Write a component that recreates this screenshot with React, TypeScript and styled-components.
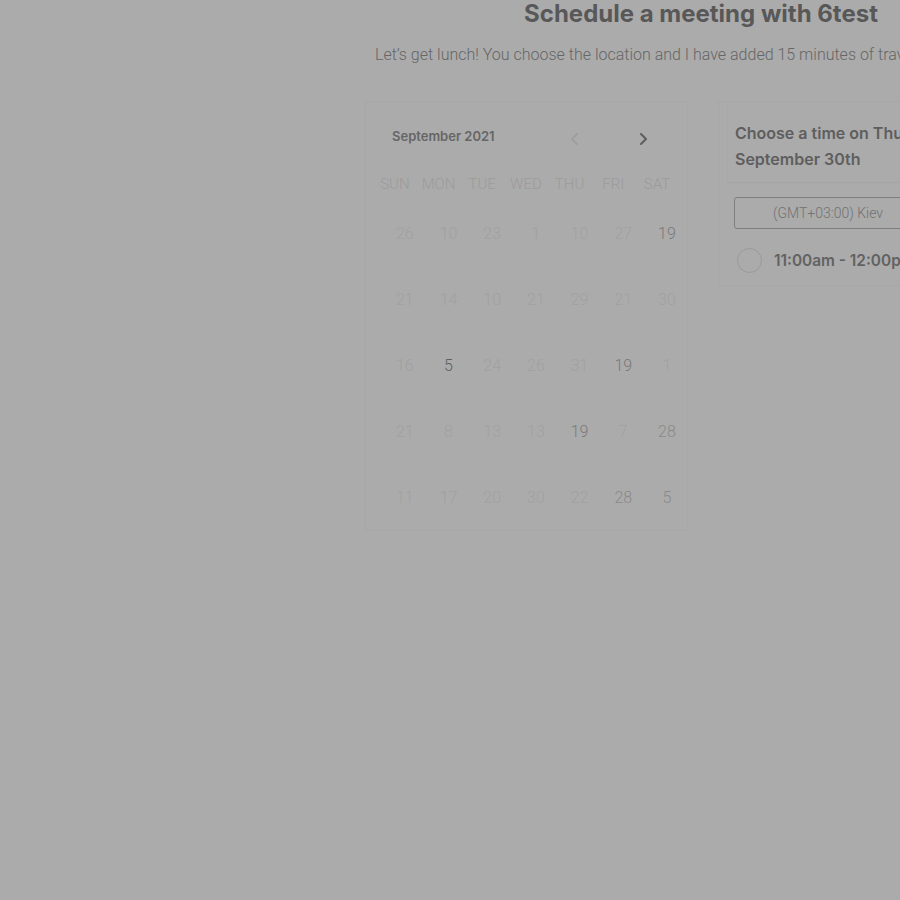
import React from "react";
import styled, { createGlobalStyle } from "styled-components";

const GlobalStyle = createGlobalStyle`
  html, body { margin: 0; padding: 0; background: #ababab; overflow: hidden; }
  * { box-sizing: border-box; }
`;

const Page = styled.div`
  width: 900px;
  height: 900px;
  overflow: hidden;
`;

const Container = styled.div`
  margin-left: 365px;
  width: 672px;
  display: flex;
  flex-direction: column;
`;

const Title = styled.h1`
  margin: 0;
  height: 27px;
  font-family: Inter, "Noto Sans", sans-serif;
  font-weight: 700;
  font-size: 24px;
  line-height: 27px;
  color: #585858;
  text-align: center;
`;

const Description = styled.p`
  margin: 16px 0 0 10px;
  font-family: Roboto, sans-serif;
  font-weight: 300;
  font-size: 16px;
  line-height: 24px;
  color: #666;
  white-space: nowrap;
`;

const Main = styled.div`
  margin-top: 34px;
  display: flex;
  align-items: flex-start;
  gap: 30px;
`;

const CalendarCard = styled.div`
  width: 323px;
  height: 430px;
  border: 1px solid #a7a7a7;
  border-radius: 3px;
  padding: 22px 10px 0 7px;
`;

const MonthBar = styled.div`
  display: flex;
  align-items: center;
  height: 24px;
  padding-left: 19px;
`;

const MonthLabel = styled.div`
  font-family: Inter, sans-serif;
  font-weight: 600;
  font-size: 13px;
  color: #666;
  width: 158px;
`;

const NavButton = styled.div<{ $active?: boolean }>`
  width: 72px;
  display: flex;
  justify-content: center;
  padding-top: 6px;
  color: ${(p) => (p.$active ? "#5e5e5e" : "#9e9e9e")};
`;

const DayHead = styled.div`
  margin-top: 26px;
  display: grid;
  grid-template-columns: repeat(7, 43.7px);
`;

const HeadCell = styled.div`
  text-align: center;
  font-family: Roboto, sans-serif;
  font-weight: 300;
  font-size: 15px;
  line-height: 20px;
  color: #9b9b9b;
`;

const DayGrid = styled.div`
  margin-top: 30px;
  padding-left: 10px;
  display: grid;
  grid-template-columns: repeat(7, 43.7px);
  grid-auto-rows: 66px;
`;

const DayCell = styled.div<{ $tone: number }>`
  text-align: center;
  font-family: Roboto, sans-serif;
  font-weight: 300;
  font-size: 16px;
  line-height: 20px;
  color: ${(p) => ["#a1a1a1", "#8a8a8a", "#797979", "#5f5f5f"][p.$tone]};
`;

const TimePanel = styled.div`
  width: 320px;
  height: 185px;
  border: 1px solid #a7a7a7;
  border-right: none;
  padding: 0 0 0 8px;
  display: flex;
  flex-direction: column;
`;

const PanelHeader = styled.div`
  padding: 18px 0 10px 7px;
  border-left: 1px solid #a8a8a8;
  border-bottom: 1px solid #a5a5a5;
  font-family: Inter, sans-serif;
  font-weight: 600;
  font-size: 16px;
  line-height: 26px;
  color: #5e5e5e;
  white-space: nowrap;
`;

const ZoneSelect = styled.div`
  margin: 14px 0 0 7px;
  width: 188px;
  height: 32px;
  flex-shrink: 0;
  border: 1px solid #7e7e7e;
  border-radius: 3px;
  display: flex;
  align-items: center;
  justify-content: center;
  font-family: Roboto, sans-serif;
  font-weight: 300;
  font-size: 14px;
  color: #727272;
`;

const Slot = styled.div`
  margin: 19px 0 0 10px;
  display: flex;
  align-items: center;
  gap: 12px;
  font-family: Inter, sans-serif;
  font-weight: 600;
  font-size: 15.4px;
  color: #626262;
  white-space: nowrap;
`;

const Radio = styled.span`
  width: 25px;
  height: 25px;
  flex-shrink: 0;
  border-radius: 50%;
  border: 1.5px solid #9a9a9a;
`;

const heads = ["SUN", "MON", "TUE", "WED", "THU", "FRI", "SAT"];
const days: [string, number][] = [
  ["26", 0], ["10", 0], ["23", 0], ["1", 0], ["10", 0], ["27", 0], ["19", 2],
  ["21", 0], ["14", 0], ["10", 0], ["21", 0], ["29", 0], ["21", 0], ["30", 0],
  ["16", 0], ["5", 3], ["24", 0], ["26", 0], ["31", 0], ["19", 2], ["1", 0],
  ["21", 0], ["8", 0], ["13", 0], ["13", 0], ["19", 2], ["7", 0], ["28", 1],
  ["11", 0], ["17", 0], ["20", 0], ["30", 0], ["22", 0], ["28", 1], ["5", 1],
];

const Chevron = ({ dir }: { dir: "l" | "r" }) => (
  <svg width="12" height="14" viewBox="0 0 12 14" fill="none">
    <path
      d={dir === "l" ? "M8 2 L3 7 L8 12" : "M4 2 L9 7 L4 12"}
      stroke="currentColor"
      strokeWidth="2"
      strokeLinecap="round"
      strokeLinejoin="round"
    />
  </svg>
);

export default function App() {
  return (
    <Page>
      <GlobalStyle />
      <Container>
        <Title>Schedule a meeting with 6test</Title>
        <Description>
          Let’s get lunch! You choose the location and I have added 15 minutes of travel time to the meeting.
        </Description>
        <Main>
          <CalendarCard>
            <MonthBar>
              <MonthLabel>September 2021</MonthLabel>
              <NavButton>
                <Chevron dir="l" />
              </NavButton>
              <NavButton $active>
                <Chevron dir="r" />
              </NavButton>
            </MonthBar>
            <DayHead>
              {heads.map((h) => (
                <HeadCell key={h}>{h}</HeadCell>
              ))}
            </DayHead>
            <DayGrid>
              {days.map(([d, t], i) => (
                <DayCell key={i} $tone={t}>
                  {d}
                </DayCell>
              ))}
            </DayGrid>
          </CalendarCard>
          <TimePanel>
            <PanelHeader>
              Choose a time on Thursday,
              <br />
              September 30th
            </PanelHeader>
            <ZoneSelect>(GMT+03:00) Kiev</ZoneSelect>
            <Slot>
              <Radio />
              11:00am - 12:00pm
            </Slot>
          </TimePanel>
        </Main>
      </Container>
    </Page>
  );
}
